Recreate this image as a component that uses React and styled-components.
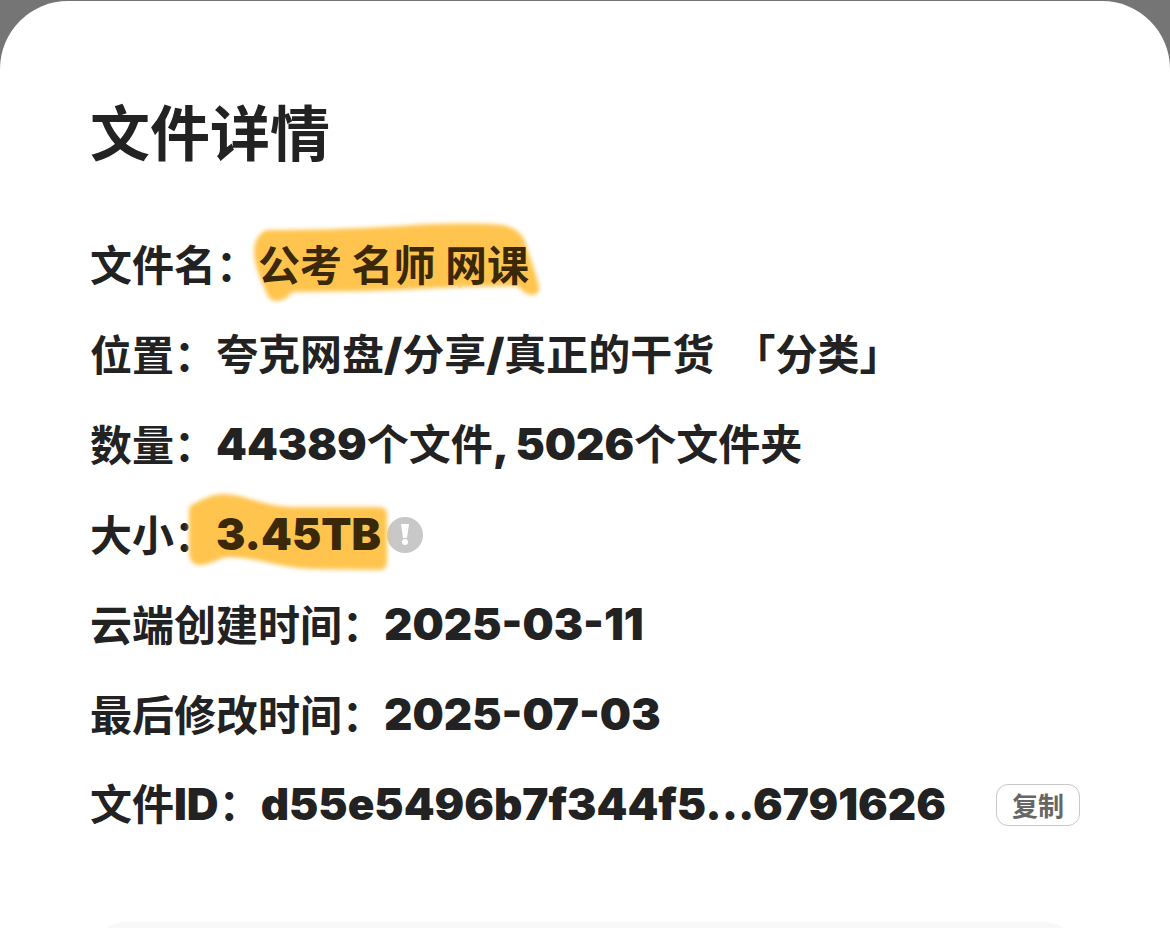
import React from 'react'
import styled, { createGlobalStyle } from 'styled-components'

const GlobalStyle = createGlobalStyle`
  * {
    box-sizing: border-box;
  }

  body {
    margin: 0;
    background-color: #757575;
    color: #222;
    font-family: 'Noto Sans CJK SC', sans-serif;
    font-weight: 600;
  }
`

const Backdrop = styled.div`
  height: 100vh;
  padding-top: 1px;
  overflow: hidden;
  background-color: #757575;
`

const Sheet = styled.main`
  min-height: 100%;
  padding: 84px 90px 0;
  border-radius: 68px 68px 0 0;
  background-color: #fff;
`

const Title = styled.h1`
  margin: 0 0 45px;
  font-size: 60px;
  line-height: 90px;
  font-weight: 600;
`

const DetailList = styled.dl`
  margin: 0;
`

const DetailRow = styled.div`
  display: flex;
  align-items: center;
  height: 90px;
  font-size: 42px;
  line-height: 60px;
  white-space: pre;
`

const Label = styled.dt`
  flex: none;
  padding-bottom: 4px;
`

const Value = styled.dd`
  position: relative;
  z-index: 0;
  margin: 0;
  padding-bottom: 4px;
  color: ${({ $marked }) => ($marked ? '#3a2808' : 'inherit')};
`

const Latin = styled.span`
  font-family: Inter, sans-serif;
  font-size: 44px;
  font-weight: 900;
`

const Marker = styled.svg`
  position: absolute;
  z-index: -1;
  top: 50%;
  left: -42px;
  transform: translateY(-50%);
  overflow: visible;
  filter: blur(2px);
  pointer-events: none;
`

const InfoButton = styled.button`
  width: 36px;
  height: 36px;
  margin-left: 6px;
  padding: 0;
  border: none;
  background: none;
  cursor: pointer;

  svg {
    display: block;
  }
`

const CopyButton = styled.button`
  width: 84px;
  height: 42px;
  margin-left: auto;
  padding: 0;
  border: 1px solid #c8c8c8;
  border-radius: 12px;
  background-color: #fff;
  color: #666;
  font-family: inherit;
  font-size: 26px;
  line-height: 38px;
  font-weight: 600;
  cursor: pointer;
`

const NextPanel = styled.div`
  height: 120px;
  margin-top: 72px;
  border-radius: 36px;
  background-color: #f8f8f8;
`

const Stroke = ({ d }) => (
  <Marker width="330" height="90" viewBox="0 0 330 90" aria-hidden="true">
    <path d={d} fill="#ffc44d" />
  </Marker>
)

const NAME_STROKE =
  'M50 10 C90 10 134 9 184 6 C224 3 259 3 286 5 C298 7 306 13 309 22 C314 38 320 53 323 66 C324 73 320 75 315 75 C308 74 305 68 300 66 C254 66 204 69 154 71 L77 72 C73 75 69 81 60 81 C52 80 51 74 48 67 C44 58 38 44 38 31 C38 22 42 14 50 10 Z'

const SIZE_STROKE =
  'M16 16 C28 9 38 4 50 4 C72 5 88 16 118 17 L205 17 C211 17 213 20 213 25 L213 72 C213 78 210 80 204 80 L140 79 C105 78 85 68 55 67 C43 68 35 76 24 75 C17 74 15 68 15 60 L15 22 Z'

const App = () => {
  return (
    <>
      <GlobalStyle />
      <Backdrop>
        <Sheet>
          <Title>文件详情</Title>
          <DetailList>
            <DetailRow>
              <Label>文件名：</Label>
              <Value $marked>
                <Stroke d={NAME_STROKE} />
                公考 名师 网课
              </Value>
            </DetailRow>
            <DetailRow>
              <Label>位置：</Label>
              <Value>
                夸克网盘<Latin>/</Latin>分享<Latin>/</Latin>真正的干货{'  '}「分类」
              </Value>
            </DetailRow>
            <DetailRow>
              <Label>数量：</Label>
              <Value>
                <Latin>44389</Latin>个文件<Latin>, 5026</Latin>个文件夹
              </Value>
            </DetailRow>
            <DetailRow>
              <Label>大小：</Label>
              <Value $marked>
                <Stroke d={SIZE_STROKE} />
                <Latin>3.45TB</Latin>
              </Value>
              <InfoButton aria-label="大小说明">
                <svg width="36" height="36" viewBox="0 0 36 36">
                  <circle cx="18" cy="18" r="18" fill="#c8c8c8" />
                  <path d="M14 7h8l-2 14h-4z" fill="#fff" />
                  <circle cx="18" cy="25" r="3" fill="#fff" />
                </svg>
              </InfoButton>
            </DetailRow>
            <DetailRow>
              <Label>云端创建时间：</Label>
              <Value>
                <Latin>2025-03-11</Latin>
              </Value>
            </DetailRow>
            <DetailRow>
              <Label>最后修改时间：</Label>
              <Value>
                <Latin>2025-07-03</Latin>
              </Value>
            </DetailRow>
            <DetailRow>
              <Label>
                文件<Latin>ID</Latin>：
              </Label>
              <Value>
                <Latin>d55e5496b7f344f5...6791626</Latin>
              </Value>
              <CopyButton>复制</CopyButton>
            </DetailRow>
          </DetailList>
          <NextPanel />
        </Sheet>
      </Backdrop>
    </>
  )
}

export default App
